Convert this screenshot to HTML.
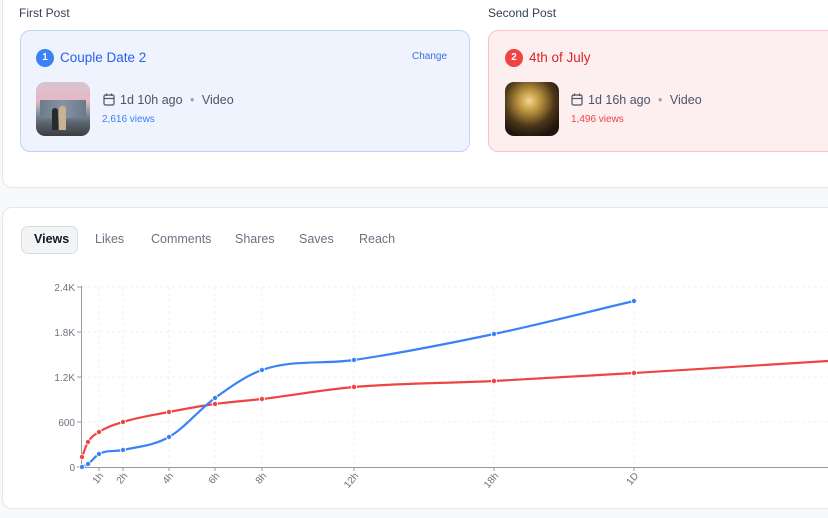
<!DOCTYPE html>
<html><head><meta charset="utf-8"><style>
*{margin:0;padding:0;box-sizing:border-box}
body{width:828px;height:518px;overflow:hidden;background:#f8f9fb;font-family:"Liberation Sans",sans-serif;position:relative}
.card{position:absolute;background:#fff;border:1px solid #e5e7eb;border-radius:10px}
.lbl{position:absolute;font-size:12px;color:#374151}
.post{position:absolute;border-radius:10px;height:122px}
.badge{position:absolute;width:18px;height:18px;border-radius:50%;color:#fff;font-size:10px;font-weight:bold;text-align:center;line-height:18px}
.title{position:absolute;font-size:13.5px}
.meta{position:absolute;font-size:12.5px;color:#4b5563}
.views{position:absolute;font-size:10px}
.thumb{position:absolute;width:54px;height:54px;border-radius:9px;overflow:hidden}
.tab{position:absolute;top:239px;font-size:12.5px;color:#6b7280;transform:translateY(-50%)}
</style></head><body>
<div class="card" style="left:2px;top:-12px;width:840px;height:200px"></div>
<div class="lbl" style="left:19px;top:6px">First Post</div>
<div class="lbl" style="left:488px;top:6px">Second Post</div>

<div class="post" style="left:20px;top:30px;width:450px;background:#eef3fd;border:1.5px solid #bcd4fb"></div>
<div class="badge" style="left:36px;top:49px;background:#3b82f6">1</div>
<div class="title" style="left:60px;top:50px;color:#2563eb">Couple Date 2</div>
<div style="position:absolute;left:412px;top:51px;font-size:10px;color:#3b6fe0">Change</div>
<div class="thumb" style="left:36px;top:82px;background:linear-gradient(#d9c4cf 0%,#e5b7c3 35%,#8d9aa9 55%,#5b6670 75%,#3a3d3f 100%)">
<div style="position:absolute;left:4px;top:18px;width:46px;height:18px;background:linear-gradient(90deg,#6d7c8c,#8594a3,#6a7a8a)"></div>
<div style="position:absolute;left:16px;top:26px;width:6px;height:22px;background:#2a2a2a;border-radius:3px 3px 0 0"></div>
<div style="position:absolute;left:23px;top:24px;width:7px;height:24px;background:#c9b290;border-radius:3px 3px 0 0"></div>
</div>
<svg style="position:absolute;left:103px;top:93px" width="12" height="13" viewBox="0 0 12 13" fill="none" stroke="#4b5563" stroke-width="1.2"><rect x="1" y="2" width="10" height="10" rx="1.5"/><line x1="1" y1="5.5" x2="11" y2="5.5"/><line x1="3.5" y1="0.5" x2="3.5" y2="3"/><line x1="8.5" y1="0.5" x2="8.5" y2="3"/></svg>
<div class="meta" style="left:120px;top:93px">1d 10h ago <span style="color:#9ca3af;margin:0 4px">•</span> Video</div>
<div class="views" style="left:102px;top:114px;color:#3b82f6">2,616 views</div>

<div class="post" style="left:488px;top:30px;width:360px;background:#fdeef0;border:1.5px solid #fbc4c8"></div>
<div class="badge" style="left:505px;top:49px;background:#ef4444">2</div>
<div class="title" style="left:529px;top:50px;color:#dc2626">4th of July</div>
<div class="thumb" style="left:505px;top:82px;background:radial-gradient(circle at 45% 35%,#f3d98a 0%,#b8903c 25%,#4a3518 55%,#1e150c 80%)"></div>
<svg style="position:absolute;left:571px;top:93px" width="12" height="13" viewBox="0 0 12 13" fill="none" stroke="#4b5563" stroke-width="1.2"><rect x="1" y="2" width="10" height="10" rx="1.5"/><line x1="1" y1="5.5" x2="11" y2="5.5"/><line x1="3.5" y1="0.5" x2="3.5" y2="3"/><line x1="8.5" y1="0.5" x2="8.5" y2="3"/></svg>
<div class="meta" style="left:588px;top:93px">1d 16h ago <span style="color:#9ca3af;margin:0 4px">•</span> Video</div>
<div class="views" style="left:571px;top:114px;color:#ef4444">1,496 views</div>

<div class="card" style="left:2px;top:207px;width:840px;height:302px"></div>
<div style="position:absolute;left:21px;top:226px;width:57px;height:28px;background:#f3f4f6;border:1px solid #d9dce1;border-radius:7px"></div>
<div class="tab" style="left:34px;color:#111827;font-weight:bold">Views</div>
<div class="tab" style="left:95px">Likes</div>
<div class="tab" style="left:151px">Comments</div>
<div class="tab" style="left:235px">Shares</div>
<div class="tab" style="left:299px">Saves</div>
<div class="tab" style="left:359px">Reach</div>

<svg id="ch" style="position:absolute;left:0;top:0" width="828" height="518" font-family="Liberation Sans, sans-serif" font-size="10" fill="#6b7280">
<g stroke="#eef0f3" stroke-dasharray="3,3" stroke-width="1">
<line x1="82" y1="287" x2="828" y2="287"/><line x1="82" y1="332" x2="828" y2="332"/><line x1="82" y1="377" x2="828" y2="377"/><line x1="82" y1="422" x2="828" y2="422"/>
<line x1="99" y1="287" x2="99" y2="467"/><line x1="123" y1="287" x2="123" y2="467"/><line x1="169" y1="287" x2="169" y2="467"/><line x1="215" y1="287" x2="215" y2="467"/><line x1="262" y1="287" x2="262" y2="467"/><line x1="354" y1="287" x2="354" y2="467"/><line x1="494" y1="287" x2="494" y2="467"/><line x1="634" y1="287" x2="634" y2="467"/>
</g>
<g stroke="#999" stroke-width="1"><line x1="81.5" y1="286" x2="81.5" y2="467"/><line x1="81" y1="467.5" x2="828" y2="467.5"/>
<line x1="77" y1="287" x2="81" y2="287"/><line x1="77" y1="332" x2="81" y2="332"/><line x1="77" y1="377" x2="81" y2="377"/><line x1="77" y1="422" x2="81" y2="422"/><line x1="77" y1="467" x2="81" y2="467"/>
<line x1="99" y1="468" x2="99" y2="471"/><line x1="123" y1="468" x2="123" y2="471"/><line x1="169" y1="468" x2="169" y2="471"/><line x1="215" y1="468" x2="215" y2="471"/><line x1="262" y1="468" x2="262" y2="471"/><line x1="354" y1="468" x2="354" y2="471"/><line x1="494" y1="468" x2="494" y2="471"/><line x1="634" y1="468" x2="634" y2="471"/></g>
<g text-anchor="end"><text x="75" y="291">2.4K</text><text x="75" y="336">1.8K</text><text x="75" y="381">1.2K</text><text x="75" y="426">600</text><text x="75" y="471">0</text></g>
<g text-anchor="end">
<text transform="translate(104,476) rotate(-50)">1h</text>
<text transform="translate(128,476) rotate(-50)">2h</text>
<text transform="translate(174,476) rotate(-50)">4h</text>
<text transform="translate(220,476) rotate(-50)">6h</text>
<text transform="translate(267,476) rotate(-50)">8h</text>
<text transform="translate(359,476) rotate(-50)">12h</text>
<text transform="translate(499,476) rotate(-50)">18h</text>
<text transform="translate(639,476) rotate(-50)">1D</text>
</g>
<path id="pr" fill="none" stroke="#ef4444" stroke-width="2.2"/>
<path id="pb" fill="none" stroke="#3b82f6" stroke-width="2.2"/>
<g id="dots"></g>
</svg>
<div style="position:absolute;left:0;top:509px;width:828px;height:9px;background:#f8f9fb"></div>
<script>
function mono(p){var n=p.length,d=[],m=[];for(var i=0;i<n-1;i++)d.push((p[i+1][1]-p[i][1])/(p[i+1][0]-p[i][0]));
m[0]=d[0];m[n-1]=d[n-2];for(i=1;i<n-1;i++){m[i]=(d[i-1]*d[i]<=0)?0:(d[i-1]+d[i])/2;}
var s="M"+p[0][0]+","+p[0][1];for(i=0;i<n-1;i++){var dx=(p[i+1][0]-p[i][0])/3;
s+="C"+(p[i][0]+dx)+","+(p[i][1]+m[i]*dx)+" "+(p[i+1][0]-dx)+","+(p[i+1][1]-m[i+1]*dx)+" "+p[i+1][0]+","+p[i+1][1];}return s;}
var B=[[82,467],[88,464],[99,454],[123,450],[169,437],[215,398],[262,370],[354,360],[494,334],[634,301]];
var R=[[82,457],[88,442],[99,432],[123,422],[169,412],[215,404],[262,399],[354,387],[494,381],[634,373],[828,361]];
document.getElementById('pb').setAttribute('d',mono(B));
document.getElementById('pr').setAttribute('d',mono(R));
var g=document.getElementById('dots'),h='';
R.slice(0,10).forEach(function(q){h+='<circle cx="'+q[0]+'" cy="'+q[1]+'" r="2.6" fill="#ef4444" stroke="#fff" stroke-width="0.8"/>';});
B.forEach(function(q){h+='<circle cx="'+q[0]+'" cy="'+q[1]+'" r="2.6" fill="#3b82f6" stroke="#fff" stroke-width="0.8"/>';});
g.innerHTML=h;
</script>
</body></html>
